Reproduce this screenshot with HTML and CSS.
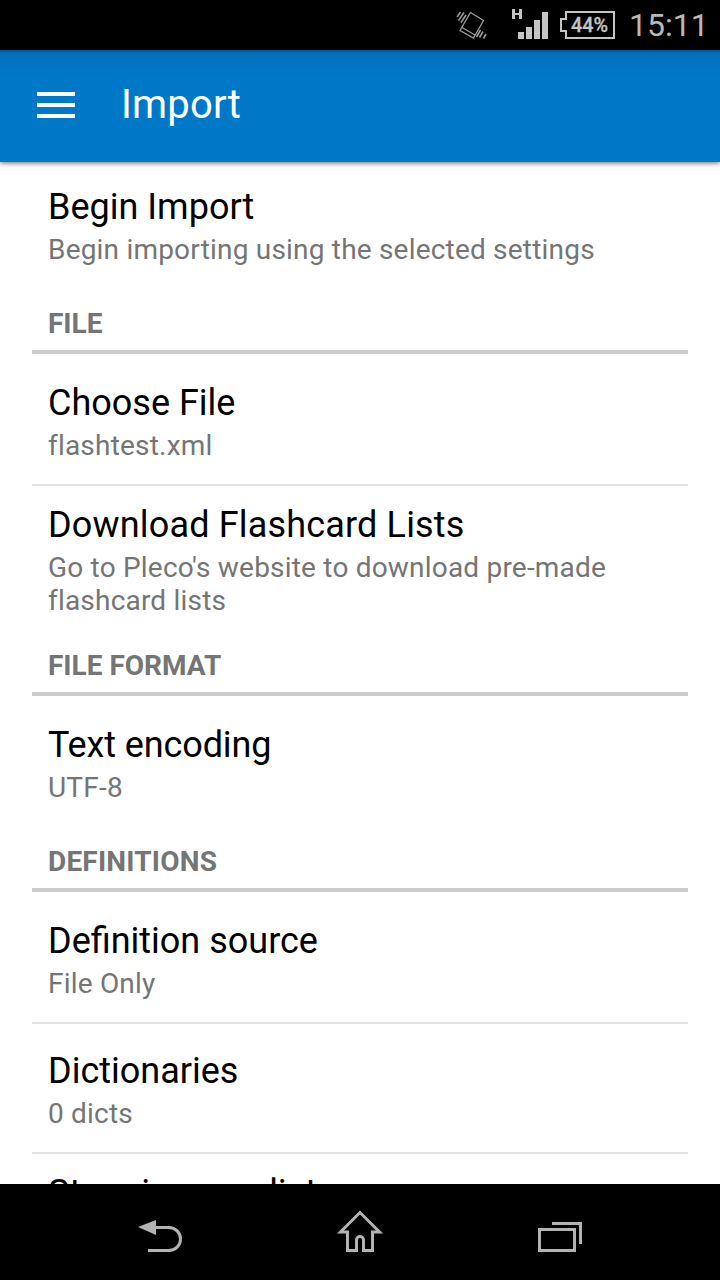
FILE: index.html
```html
<!DOCTYPE html>
<html lang="en">
<head>
<meta charset="utf-8">
<title>Import</title>
<link rel="stylesheet" href="styles.css">
</head>
<body>
<div class="screen">
  <div class="status">
    <svg class="status-icons" width="180" height="50" viewBox="440 0 180 50" fill="none">
      <g stroke="#999" stroke-width="1.3">
        <path d="M470.5 12.5L483.5 20.5L473.5 38L460 30.5Z M462 27.5L475 35"/>
        <path d="M460.500 12L457 17M464 12.500L458.500 20.500M466 15L461 22.500M480.500 30L476.500 37M483 31.500L479.500 37.500M486 34L483.500 38.500" stroke-width="1.6"/>
      </g>
      <path d="M512 9h3v4h4v-4h3v10h-3v-4h-4v4h-3z M518 32h6v7h-6z M526 27h6v12h-6z M534 20h6v19h-6z M542 12h6v27h-6z" fill="#c4c4c4"/>
      <path d="M566 12H614V38H566V31H561V19H566Z" stroke="#c4c4c4" stroke-width="2"/>
      <text class="battery" x="571" y="32" textLength="37" lengthAdjust="spacingAndGlyphs">44%</text>
    </svg>
    <span class="clock">15:11</span>
  </div>
  <header class="bar">
    <svg width="38" height="26" viewBox="0 0 38 26" fill="#fff"><path d="M0 0h38v4H0zM0 11h38v4H0zM0 22h38v4H0z"/></svg>
    <h1 class="bar-title">Import</h1>
  </header>
  <main class="list">
    <section class="row first"><div class="title">Begin Import</div><div class="summary">Begin importing using the selected settings</div></section>
    <h2 class="heading">FILE</h2>
    <section class="row after-heading divided"><div class="title">Choose File</div><div class="summary">flashtest.xml</div></section>
    <section class="row tall"><div class="title wide">Download Flashcard Lists</div><div class="summary">Go to Pleco's website to download pre-made flashcard lists</div></section>
    <h2 class="heading">FILE FORMAT</h2>
    <section class="row after-heading before-heading"><div class="title narrow">Text encoding</div><div class="summary">UTF-8</div></section>
    <h2 class="heading spaced">DEFINITIONS</h2>
    <section class="row after-heading divided"><div class="title">Definition source</div><div class="summary">File Only</div></section>
    <section class="row divided"><div class="title">Dictionaries</div><div class="summary">0 dicts</div></section>
    <section class="row tall"><div class="title">Store in user dict</div></section>
  </main>
  <nav class="nav">
    <svg width="720" height="96" viewBox="0 1184 720 96" fill="none" stroke="#b3b3b3" stroke-width="3">
      <path d="M155 1227.500H169A11.500 11.500 0 0 1 169 1250.500H148"/>
      <path d="M138 1227L156 1220V1235Z" fill="#b3b3b3" stroke="none"/>
      <path d="M360 1212.500L340.500 1232H347.500V1250.500H356.500V1240A3.500 3.500 0 0 1 363.500 1240V1250.500H372.500V1232H379.500Z"/>
      <path d="M539.500 1229.500H574.500V1250.500H539.500Z M552 1223.500H580.500V1244"/>
    </svg>
  </nav>
</div>
</body>
</html>
```
FILE: styles.css
```css
* { box-sizing: border-box; }
body { margin: 0; font-family: Roboto, sans-serif; }
.screen { width: 720px; height: 1280px; display: flex; flex-direction: column; overflow: hidden; background: #fff; }
.status { height: 50px; flex: none; background: #000; display: flex; justify-content: flex-end; padding-right: 14px; }
.status-icons { flex: none; margin-right: 9px; }
.battery { font: 500 20px Roboto, sans-serif; fill: #c4c4c4; stroke: #c4c4c4; stroke-width: .3px; }
.clock { font-size: 32px; line-height: 51px; color: #b8b8b8; width: 77px; white-space: nowrap; }
.bar { height: 112px; flex: none; display: flex; align-items: center; gap: 46px; padding: 0 37px 2px; color: #fff; background: linear-gradient(#00538a, #0070b8 3px, #0078c8 20px); box-shadow: 0 1px 5px rgba(0,0,0,.6); z-index: 1; }
.bar-title { margin: 0; font-size: 40px; line-height: 48px; font-weight: 400; letter-spacing: .2px; }
.list { flex: 1; min-height: 0; overflow: hidden; padding: 0 32px; }
.row { height: 130px; padding: 26px 16px 0; }
.row.first { height: 130px; padding-top: 24px; }
.row.after-heading { height: 132px; padding-top: 28px; }
.row.before-heading { height: 134px; }
.row.tall { height: 148px; padding-top: 18px; }
.divided { border-bottom: 2px solid #e2e2e2; }
.title { font-size: 36px; line-height: 43px; color: #000; }
.title.wide { letter-spacing: .17px; }
.title.narrow { letter-spacing: -.12px; }
.summary { font-size: 28px; line-height: 33px; letter-spacing: .2px; color: #757575; }
.title + .summary { margin-top: 4px; }
.heading { margin: 0; height: 62px; padding: 15px 16px 0; font-size: 28px; line-height: 33px; font-weight: 700; color: #757575; border-bottom: 4px solid #ccc; }
.heading.spaced { letter-spacing: .2px; }
.nav { height: 96px; flex: none; background: #000; }
```
